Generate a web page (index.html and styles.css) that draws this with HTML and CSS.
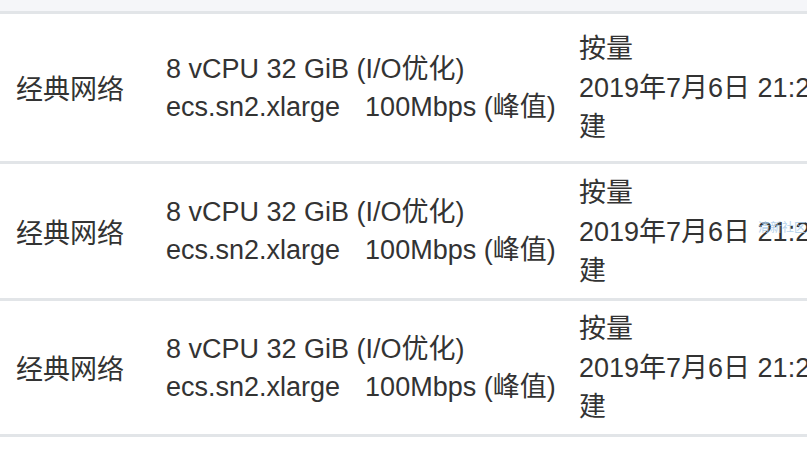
FILE: index.html
```html
<!DOCTYPE html>
<html lang="zh-CN">
<head>
<meta charset="utf-8">
<link rel="stylesheet" href="styles.css">
</head>
<body>
<div class="page">
  <div class="topbar"></div>
  <div class="list">
    <div class="row row-first">
      <div class="cell net">经典网络</div>
      <div class="cell spec">
        <div>8 vCPU 32 GiB (I/O优化)</div>
        <div>ecs.sn2.xlarge<span class="bw">100Mbps (峰值)</span></div>
      </div>
      <div class="cell bill">
        <div>按量</div>
        <div>2019年7月6日 21:23 创</div>
        <div>建</div>
      </div>
    </div>
    <div class="row">
      <div class="cell net">经典网络</div>
      <div class="cell spec">
        <div>8 vCPU 32 GiB (I/O优化)</div>
        <div>ecs.sn2.xlarge<span class="bw">100Mbps (峰值)</span></div>
      </div>
      <div class="cell bill">
        <div>按量</div>
        <div>2019年7月6日 21:23 创</div>
        <div>建</div>
      </div>
      <span class="watermark">清新社区</span>
    </div>
    <div class="row row-last">
      <div class="cell net">经典网络</div>
      <div class="cell spec">
        <div>8 vCPU 32 GiB (I/O优化)</div>
        <div>ecs.sn2.xlarge<span class="bw">100Mbps (峰值)</span></div>
      </div>
      <div class="cell bill">
        <div>按量</div>
        <div>2019年7月6日 21:23 创</div>
        <div>建</div>
      </div>
    </div>
  </div>
</div>
</body>
</html>
```

FILE: styles.css
```css
html, body {
  margin: 0;
  padding: 0;
  background: #ffffff;
}
.page {
  width: 807px;
  height: 454px;
  overflow: hidden;
  font-family: "Liberation Sans", "Noto Sans CJK SC", sans-serif;
  color: #333333;
  font-size: 27px;
}
.topbar {
  height: 11px;
  background: #f5f6f9;
  border-bottom: 3px solid #e2e5e8;
}
.row {
  position: relative;
  display: grid;
  grid-template-columns: 150px 413px 1fr;
  align-items: center;
  height: 134px;
  border-bottom: 3px solid #e2e5e8;
}
.row-first {
  height: 147px;
}
.row-last {
  height: 133px;
}
.cell {
  padding-left: 16px;
  white-space: nowrap;
}
.net {
  font-size: 27px;
}
.spec {
  line-height: 38px;
}
.bw {
  margin-left: 25px;
}
.bill {
  line-height: 39px;
  padding-top: 2px;
}
.watermark {
  position: absolute;
  left: 758px;
  top: 56px;
  font-size: 12px;
  line-height: 14px;
  white-space: nowrap;
  color: #a9cbea;
  opacity: 0.85;
  font-family: "Noto Sans CJK SC", sans-serif;
}
```
